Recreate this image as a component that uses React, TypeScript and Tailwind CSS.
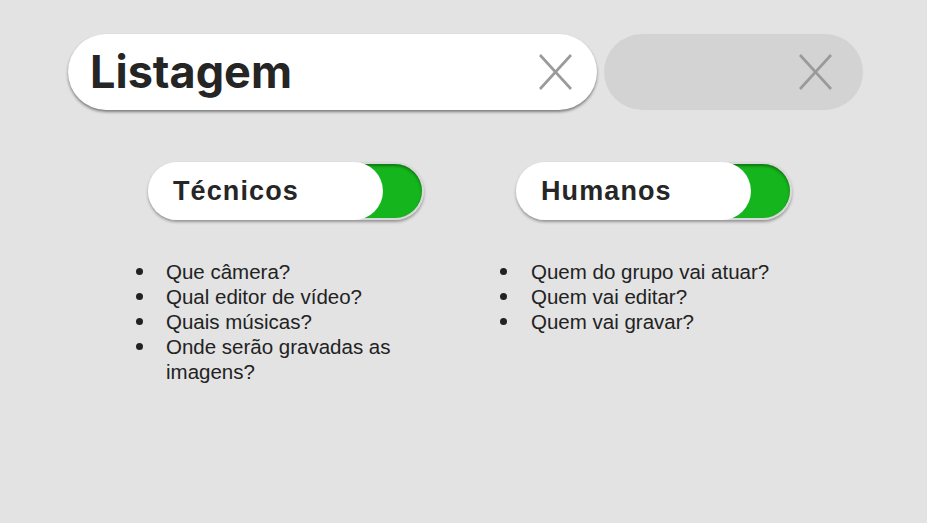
import React from "react";

function XIcon() {
  return (
    <svg width="33" height="36" viewBox="0 0 33 36" fill="none">
      <line x1="1" y1="1" x2="32" y2="35" stroke="#9a9a9a" strokeWidth="2.6" />
      <line x1="32" y1="1" x2="1" y2="35" stroke="#9a9a9a" strokeWidth="2.6" />
    </svg>
  );
}

function Toggle({ label }: { label: string }) {
  return (
    <div className="relative h-[58px] w-[276px] rounded-full shadow-[0_2px_3px_rgba(0,0,0,0.35)]">
      <div className="absolute inset-0 rounded-full bg-[#d8d8d8] p-[2px]">
        <div className="h-full w-full rounded-full bg-[#15b51d] shadow-[inset_0_2px_3px_rgba(0,0,0,0.35)]" />
      </div>
      <div className="relative z-10 flex h-full w-[235px] items-center rounded-full bg-white pl-[25px]">
        <span className="text-[27px] font-bold tracking-[1.1px] text-[#262626] [font-family:'Liberation_Sans',Arial,sans-serif]">
          {label}
        </span>
      </div>
    </div>
  );
}

function List({ items, offset, gutter }: { items: string[]; offset: string; gutter: string }) {
  return (
    <ul className={`mt-[39px] flex flex-col ${offset}`}>
      {items.map((t) => (
        <li key={t} className="flex items-start">
          <span className={`flex h-[25px] shrink-0 items-center ${gutter}`}>
            <span className="block h-[6.5px] w-[6.5px] rounded-full bg-[#222]" />
          </span>
          <span className="w-[250px] text-[20.5px] leading-[25px] text-[#222] [font-family:'Liberation_Sans',Arial,sans-serif]">
            {t}
          </span>
        </li>
      ))}
    </ul>
  );
}

export default function App() {
  return (
    <div className="h-[523px] w-full overflow-hidden bg-[#e3e3e3]">
      <div className="flex gap-[7px] pl-[68px] pt-[34px]">
        <div className="flex h-[76px] w-[529px] items-center justify-between rounded-full bg-white pl-[22px] pr-[25px] shadow-[0_2px_3px_rgba(0,0,0,0.45)]">
          <span className="text-[45px] font-bold text-[#252525] [font-family:Inter,sans-serif]">Listagem</span>
          <XIcon />
        </div>
        <div className="flex h-[76px] w-[259px] items-center justify-end rounded-full bg-[#d3d3d3] pr-[31px]">
          <XIcon />
        </div>
      </div>
      <div className="mt-[52px] flex gap-[92px] pl-[148px]">
        <div className="flex w-[276px] flex-col">
          <Toggle label="Técnicos" />
          <List
            offset="ml-[-12px]"
            gutter="w-[30px]"
            items={["Que câmera?", "Qual editor de vídeo?", "Quais músicas?", "Onde serão gravadas as imagens?"]}
          />
        </div>
        <div className="flex w-[276px] flex-col">
          <Toggle label="Humanos" />
          <List
            offset="ml-[-16px]"
            gutter="w-[31px]"
            items={["Quem do grupo vai atuar?", "Quem vai editar?", "Quem vai gravar?"]}
          />
        </div>
      </div>
    </div>
  );
}
